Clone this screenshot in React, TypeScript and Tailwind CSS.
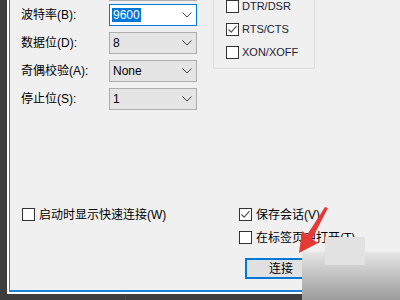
import React from 'react';

const Chevron = () => (
  <svg width="10" height="6" viewBox="0 0 10 6" fill="none">
    <path d="M0.5 0.5 L5 5 L9.5 0.5" stroke="#444" strokeWidth="1" />
  </svg>
);

const Box: React.FC<{ checked?: boolean }> = ({ checked }) => (
  <div className="w-[13px] h-[13px] shrink-0 border border-[#333] bg-white flex items-center justify-center">
    {checked && (
      <svg width="11" height="11" viewBox="0 0 11 11" fill="none">
        <path d="M1.5 5.5 L4.2 8.2 L9.5 2.2" stroke="#555" strokeWidth="1.2" />
      </svg>
    )}
  </div>
);

const Combo: React.FC<{ value: string; active?: boolean; className?: string }> = ({ value, active, className = '' }) => (
  <div
    className={`w-[88px] h-[22px] flex items-center justify-between pr-[4px] border text-[12px] ${
      active ? 'bg-white border-[#0078d7] pl-[2px]' : 'bg-[#e5e5e5] border-[#adadad] pl-[3px]'
    } ${className}`}
  >
    {active ? (
      <span className="bg-[#0078d7] text-white px-[1px] leading-[14px]">{value}</span>
    ) : (
      <span className="text-black leading-[14px]">{value}</span>
    )}
    <Chevron />
  </div>
);

const Row: React.FC<{ label: string; value: string; active?: boolean; className?: string }> = ({ label, value, active, className = '' }) => (
  <div className={`flex items-center h-[22px] ${className}`}>
    <div className="w-[88px] text-[12px] text-black">{label}</div>
    <Combo value={value} active={active} />
  </div>
);

const Check: React.FC<{ label: string; checked?: boolean; className?: string }> = ({ label, checked, className = '' }) => (
  <div className={`flex items-center gap-[3px] h-[13px] ${className}`}>
    <Box checked={checked} />
    <span className="text-[11px] text-[#1c1c38] leading-[13px] whitespace-nowrap">{label}</span>
  </div>
);

const Check12: React.FC<{ label: string; checked?: boolean; className?: string }> = ({ label, checked, className = '' }) => (
  <div className={`flex items-center gap-[4px] h-[13px] ${className}`}>
    <Box checked={checked} />
    <span className="text-[12px] text-black leading-[14px] whitespace-nowrap">{label}</span>
  </div>
);

export default function App() {
  return (
    <div className="relative w-[400px] h-[300px] overflow-hidden bg-[#3d3d3d] font-['Liberation_Sans','Noto_Sans_CJK_SC',sans-serif] flex flex-col">
      <div className="ml-[7px] h-[294px] shrink-0 bg-white pl-[2px] pb-[2px]">
        <div className="h-full border-l border-b-2 border-[#1883d7] bg-[#f0f0f0] flex flex-col">
          {/* top: serial settings */}
          <div className="flex h-[110px]">
            <div className="pl-[11px] mt-[-21px] flex flex-col">
              <div className="flex items-center h-[22px]">
                <div className="w-[88px]" />
                <div className="w-[88px] h-[22px] border border-[#adadad] bg-[#e5e5e5]" />
              </div>
              <Row label="波特率(B):" value="9600" active className="mt-[3px]" />
              <Row label="数据位(D):" value="8" className="mt-[6px]" />
              <Row label="奇偶校验(A):" value="None" className="mt-[6px]" />
              <Row label="停止位(S):" value="1" className="mt-[6px]" />
            </div>
            <div className="ml-[16px] mt-[-40px] self-start w-[102px] border border-[#dcdcdc] pl-[12px] pt-[39px] pb-[9px] flex flex-col gap-[10px]">
              <Check label="DTR/DSR" />
              <Check label="RTS/CTS" checked />
              <Check label="XON/XOFF" />
            </div>
          </div>

          {/* bottom options */}
          <div className="flex mt-[98px]">
            <div className="w-[229px] pl-[12px]">
              <Check12 label="启动时显示快速连接(W)" />
            </div>
            <div className="flex flex-col">
              <Check12 label="保存会话(V)" checked />
              <Check12 label="在标签页中打开(T)" className="mt-[10px]" />
              <button className="ml-[6px] mt-[14px] w-[72px] h-[21px] border-2 border-[#0078d7] bg-[#e1e1e1] text-[12px] text-black leading-none flex items-center justify-center">
                连接
              </button>
            </div>
          </div>
        </div>
      </div>
      <div className="flex-1 flex">
        <div className="ml-[125px] w-px bg-[#4a4a4a]" />
      </div>

      {/* watermark overlay */}
      <div className="absolute left-[302px] top-[252px] right-0 bottom-0 bg-gradient-to-b from-[#e6e6e6] to-[#9c9c9c]" />
      <div className="absolute left-[325px] top-[237px] w-[40px] h-[28px] bg-[#e2e2e2]" />
      <svg className="absolute left-0 top-0 pointer-events-none" width="400" height="300" viewBox="0 0 400 300">
        <polygon
          points="299,253 302,231 307,235 325,207 328,208 312,239 318,243"
          fill="#e53935"
        />
      </svg>
    </div>
  );
}
